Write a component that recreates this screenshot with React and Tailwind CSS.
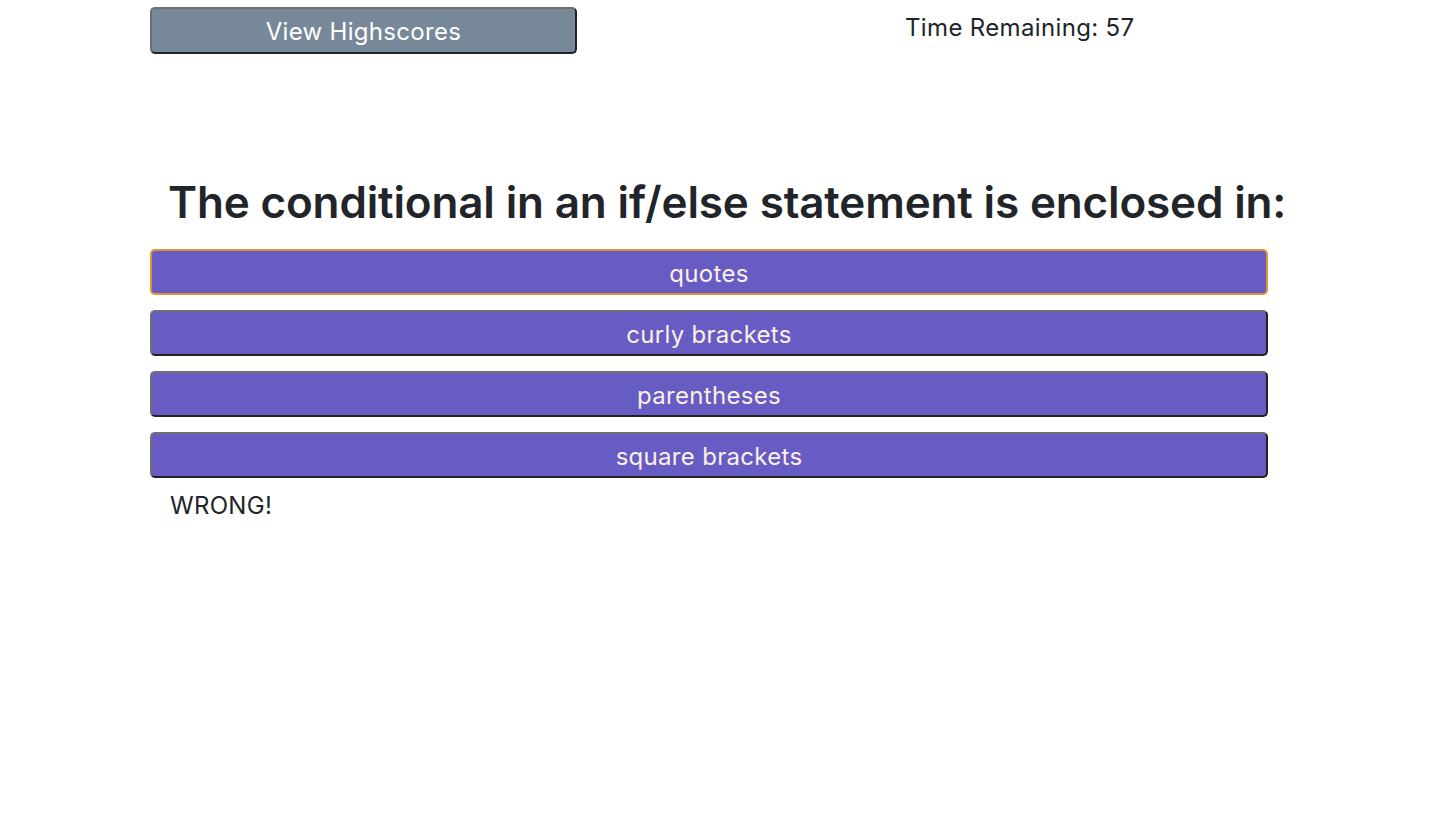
import React from 'react';

const answers = ['quotes', 'curly brackets', 'parentheses', 'square brackets'];

const App = () => {
  return (
    <div className="min-h-screen bg-white text-[#212529]" style={{ fontFamily: 'Inter, "Noto Sans", sans-serif' }}>
      <div className="w-[1140px] ml-[150px]">
        {/* header row */}
        <div className="flex items-start pt-[7px]">
          <button className="w-[427px] h-[47px] pt-[3px] rounded-[5px] border-2 border-t-[#6f6f6f] border-l-[#6f6f6f] border-r-[#222] border-b-[#222] bg-[#778899] text-white text-[24px] leading-none tracking-[0.3px]">
            View Highscores
          </button>
          <div className="ml-[328px] mt-[6px] text-[24px] leading-[30px] tracking-[0.35px]">Time Remaining: 57</div>
        </div>

        <h1 className="mt-[124px] pl-[18px] text-[44px] leading-[48px] font-semibold whitespace-nowrap tracking-[-0.15px]">
          The conditional in an if/else statement is enclosed in:
        </h1>

        <div className="mt-[23px] w-[1118px] flex flex-col gap-[15px]">
          {answers.map((a, i) => (
            <button
              key={a}
              className={
                i === 0
                  ? 'h-[46px] pt-[3px] rounded-[5px] border-2 border-[#e0962e] bg-[#675bc4] text-[#faf0e6] text-[24px] leading-none tracking-[0.3px]'
                  : 'h-[46px] pt-[3px] rounded-[5px] border-2 border-t-[#6f6f6f] border-l-[#6f6f6f] border-r-[#222] border-b-[#222] bg-[#675bc4] text-[#faf0e6] text-[24px] leading-none tracking-[0.3px]'
              }
            >
              {a}
            </button>
          ))}
        </div>

        <p className="mt-[10px] pl-[20px] text-[24px] leading-[36px] tracking-[0.3px]">WRONG!</p>
      </div>
    </div>
  );
};

export default App;
